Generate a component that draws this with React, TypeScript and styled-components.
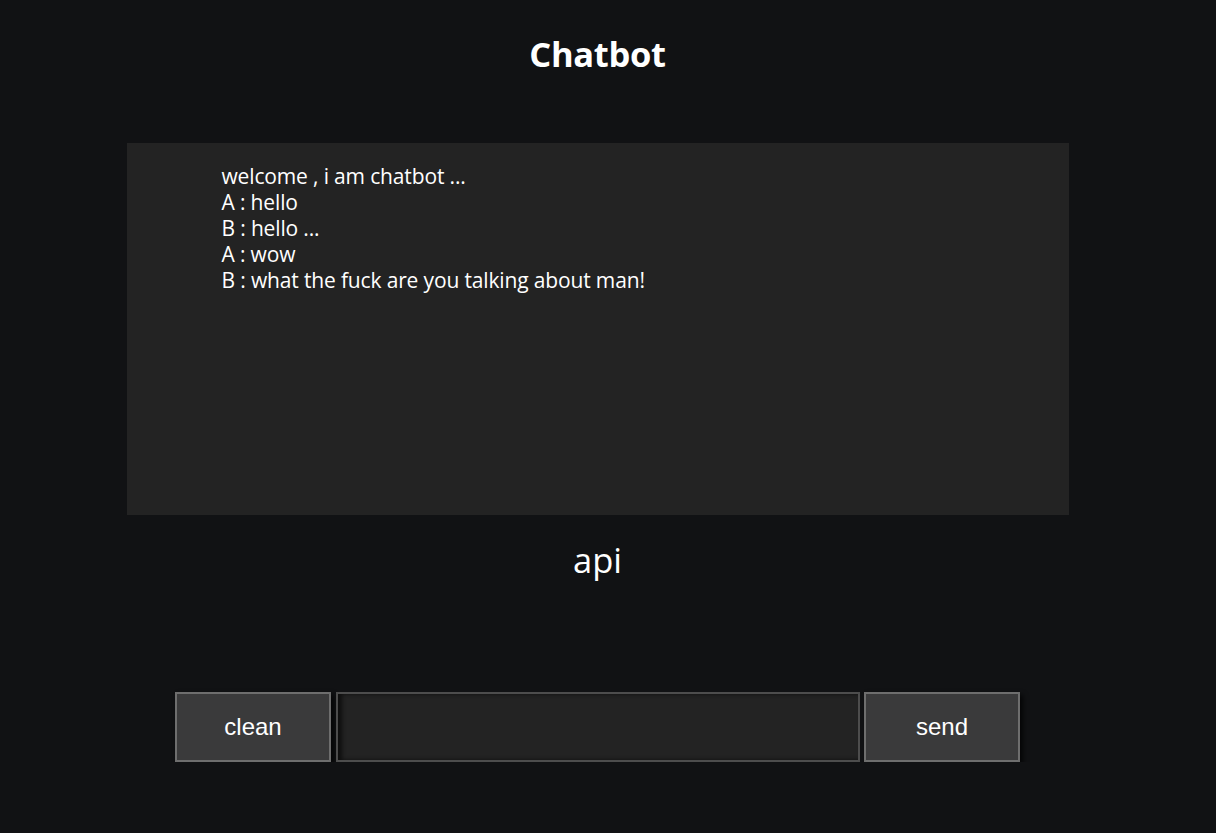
import React from "react";
import styled, { createGlobalStyle } from "styled-components";

const Global = createGlobalStyle`
  html, body { margin: 0; padding: 0; background: #111214; }
  body { font-family: "Open Sans", "Noto Sans", sans-serif; color: #fff; }
`;

const Page = styled.div`
  width: 1195px;
  display: flex;
  flex-direction: column;
  align-items: center;
`;

const Title = styled.h1`
  margin: 31px 0 0;
  font-size: 34.5px;
  font-weight: 700;
  line-height: 46px;
  letter-spacing: -0.3px;
`;

const ChatBox = styled.div`
  margin-top: 66px;
  width: 942px;
  height: 372px;
  box-sizing: border-box;
  background: #232323;
  padding: 20px 0 0 95px;
`;

const Line = styled.div`
  font-size: 21px;
  line-height: 26px;
  letter-spacing: -0.15px;
`;

const Api = styled.div`
  margin-top: 20px;
  font-size: 34.5px;
  line-height: 50px;
`;

const Controls = styled.div`
  margin-top: 107px;
  display: flex;
  align-items: stretch;
  gap: 4px;
`;

const Button = styled.button`
  width: 156px;
  height: 70px;
  box-sizing: border-box;
  background: #3a3a3b;
  border: 2px solid #6e6e6e;
  color: #fff;
  font-family: "Liberation Sans", Arial, sans-serif;
  font-size: 24px;
  box-shadow: 3px 3px 5px rgba(0, 0, 0, 0.75);
  padding: 0;
`;

const Input = styled.input`
  width: 524px;
  height: 70px;
  box-sizing: border-box;
  background: #232323;
  border: 2px solid #4d4d4d;
  box-shadow: inset 4px 0 4px rgba(0, 0, 0, 0.6);
  color: #fff;
  outline: none;
`;

const lines = [
  "welcome , i am chatbot ...",
  "A : hello",
  "B : hello ...",
  "A : wow",
  "B : what the fuck are you talking about man!",
];

export default function App() {
  return (
    <Page>
      <Global />
      <Title>Chatbot</Title>
      <ChatBox>
        {lines.map((l, i) => (
          <Line key={i}>{l}</Line>
        ))}
      </ChatBox>
      <Api>api</Api>
      <Controls>
        <Button style={{ marginRight: 1 }}>clean</Button>
        <Input />
        <Button>send</Button>
      </Controls>
    </Page>
  );
}
